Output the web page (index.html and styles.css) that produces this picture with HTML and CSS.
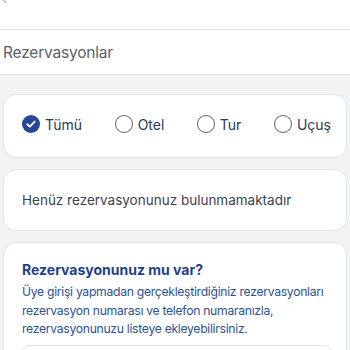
FILE: index.html
```html
<!DOCTYPE html>
<html lang="tr">
<head>
<meta charset="utf-8">
<link rel="stylesheet" href="styles.css">
</head>
<body>
<div class="page">
  <header class="topbar"><span class="back"></span></header>
  <div class="titlebar"><h1 class="title">Rezervasyonlar</h1></div>
  <main class="content">
    <section class="card filters">
      <label class="radio checked">
        <span class="dot"><svg viewBox="0 0 18 18" width="18" height="18"><circle cx="9" cy="9" r="9" fill="#24479a"/><path d="M5.3 9.2l2.5 2.4 4.9-5" fill="none" stroke="#fff" stroke-width="1.9" stroke-linecap="round" stroke-linejoin="round"/></svg></span>
        <span class="lbl">Tümü</span>
      </label>
      <label class="radio"><span class="dot empty"></span><span class="lbl">Otel</span></label>
      <label class="radio"><span class="dot empty"></span><span class="lbl">Tur</span></label>
      <label class="radio"><span class="dot empty"></span><span class="lbl">Uçuş</span></label>
    </section>
    <section class="card empty-card">
      <p class="empty-text">Henüz rezervasyonunuz bulunmamaktadır</p>
    </section>
    <section class="card add-card">
      <h2 class="add-title">Rezervasyonunuz mu var?</h2>
      <p class="add-text">Üye girişi yapmadan gerçekleştirdiğiniz rezervasyonları<br>rezervasyon numarası ve telefon numaranızla,<br>rezervasyonunuzu listeye ekleyebilirsiniz.</p>
      <div class="input"></div>
    </section>
  </main>
</div>
</body>
</html>
```
FILE: styles.css
```css
* { box-sizing: border-box; }
html, body { margin: 0; padding: 0; }
body {
  font-family: "Inter", "Noto Sans", sans-serif;
  background: #f2f3f5;
  width: 350px;
  height: 350px;
  overflow: hidden;
}
.page { display: flex; flex-direction: column; }
.topbar {
  height: 30px;
  background: #fff;
  border-bottom: 1px solid #dfe1e5;
  position: relative;
}
.back {
  position: absolute;
  left: 3px; top: -4px;
  width: 6px; height: 6px;
  border-left: 1.5px solid #9a9ea6;
  border-bottom: 1.5px solid #9a9ea6;
  transform: rotate(45deg);
}
.titlebar {
  height: 45px;
  background: #fff;
  border-bottom: 1px solid #dfe1e5;
  display: flex;
  align-items: center;
  padding-left: 3px;
}
.title {
  margin: 0;
  font-size: 15.5px;
  font-weight: 400;
  color: #5b606b;
  letter-spacing: -0.2px;
}
.content {
  display: flex;
  flex-direction: column;
  gap: 11px;
  padding: 19px 3px 0 3px;
}
.card {
  background: #fff;
  border: 1px solid #e3e5e9;
  border-radius: 13px;
}
.filters {
  height: 64px;
  display: flex;
  align-items: center;
  justify-content: space-between;
  padding: 0 15px 4px 18px;
}
.radio {
  display: flex;
  align-items: center;
  gap: 5px;
  font-size: 14px;
  color: #2c3a57;
}
.dot { width: 18px; height: 18px; display: block; }
.dot svg { display: block; }
.dot.empty {
  border: 1.3px solid #5c5f66;
  border-radius: 50%;
}
.empty-card {
  height: 62px;
  display: flex;
  align-items: center;
  padding: 0 18px;
}
.empty-text {
  margin: 0;
  font-size: 13.5px;
  color: #3c4252;
}
.add-card {
  height: 140px;
  padding: 18px 18px 0 18px;
}
.add-title {
  margin: 0;
  font-size: 14px;
  font-weight: 700;
  color: #1d3f8c;
}
.add-text {
  margin: 5px 0 0 0;
  font-size: 12.2px;
  line-height: 18.5px;
  letter-spacing: -0.3px;
  color: #2b5296;
  white-space: nowrap;
}
.input {
  margin-top: 6px;
  height: 40px;
  border: 1px solid #dfe2e7;
  border-radius: 8px;
  width: 310px;
}
```
